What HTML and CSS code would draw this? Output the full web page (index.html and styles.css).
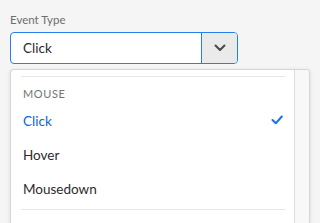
FILE: index.html
```html
<!DOCTYPE html>
<html>
<head>
<meta charset="utf-8">
<link rel="stylesheet" href="styles.css">
</head>
<body>
<div class="field">
  <div class="label">Event Type</div>
  <div class="picker">
    <div class="picker-value">Click</div>
    <div class="picker-btn">
      <svg width="12" height="8" viewBox="0 0 12 8"><polyline points="1.5,1.5 6,6 10.5,1.5" fill="none" stroke="#4b4b4b" stroke-width="2" stroke-linecap="round" stroke-linejoin="round"/></svg>
    </div>
  </div>
  <div class="popover">
    <div class="list">
      <div class="divider top"></div>
      <div class="heading">MOUSE</div>
      <div class="item selected"><span>Click</span>
        <svg class="check" width="12" height="10" viewBox="0 0 12 10"><polyline points="1.5,5 4.8,8.3 10.8,1.5" fill="none" stroke="#1473e6" stroke-width="2" stroke-linecap="round" stroke-linejoin="round"/></svg>
      </div>
      <div class="item"><span>Hover</span></div>
      <div class="item"><span>Mousedown</span></div>
      <div class="divider bottom"></div>
    </div>
    <div class="scrollbar"></div>
  </div>
</div>
</body>
</html>
```
FILE: styles.css
```css
html, body {
  margin: 0;
  padding: 0;
  background: #f5f5f5;
  font-family: Lato, "Noto Sans", sans-serif;
  overflow: hidden;
  height: 223px;
}
.field {
  padding: 13px 0 0 10px;
}
.label {
  font-size: 11.5px;
  line-height: 14px;
  color: #6e6e6e;
  height: 19px;
}
.picker {
  display: flex;
  width: 228px;
  height: 32px;
  box-sizing: border-box;
  border: 1px solid #2680eb;
  border-radius: 4px;
  background: #fff;
  overflow: hidden;
}
.picker-value {
  flex: 1;
  padding-left: 12px;
  font-size: 13.5px;
  line-height: 30px;
  color: #2c2c2c;
}
.picker-btn {
  width: 35px;
  border-left: 1px solid #2680eb;
  background: #eaeaea;
  display: flex;
  align-items: center;
  justify-content: center;
}
.popover {
  margin-top: 5px;
  width: 300px;
  height: 154px;
  box-sizing: border-box;
  border: 1px solid #d6d6d6;
  border-bottom: 0;
  border-radius: 4px 4px 0 0;
  background: #fff;
  box-shadow: 0 1px 4px rgba(0,0,0,0.12);
  display: flex;
  overflow: hidden;
}
.list {
  width: 283px;
  padding-top: 6px;
}
.divider {
  height: 1px;
  background: #e6e6e6;
  margin: 0 9px 0 10px;
}
.divider.bottom {
  margin-top: 3px;
}
.heading {
  padding: 8px 0 0 12px;
  height: 19px;
  line-height: 18px;
  font-size: 11px;
  letter-spacing: 0.6px;
  color: #747474;
}
.item {
  height: 34px;
  display: flex;
  align-items: center;
  justify-content: space-between;
  padding: 0 11px 0 12px;
  font-size: 13.5px;
  color: #2c2c2c;
}
.item.selected {
  color: #0d66d0;
}
.check {
  margin-top: -2px;
}
.scrollbar {
  width: 14px;
  border-left: 1px solid #dedede;
  background: #f8f8f8;
}
```
